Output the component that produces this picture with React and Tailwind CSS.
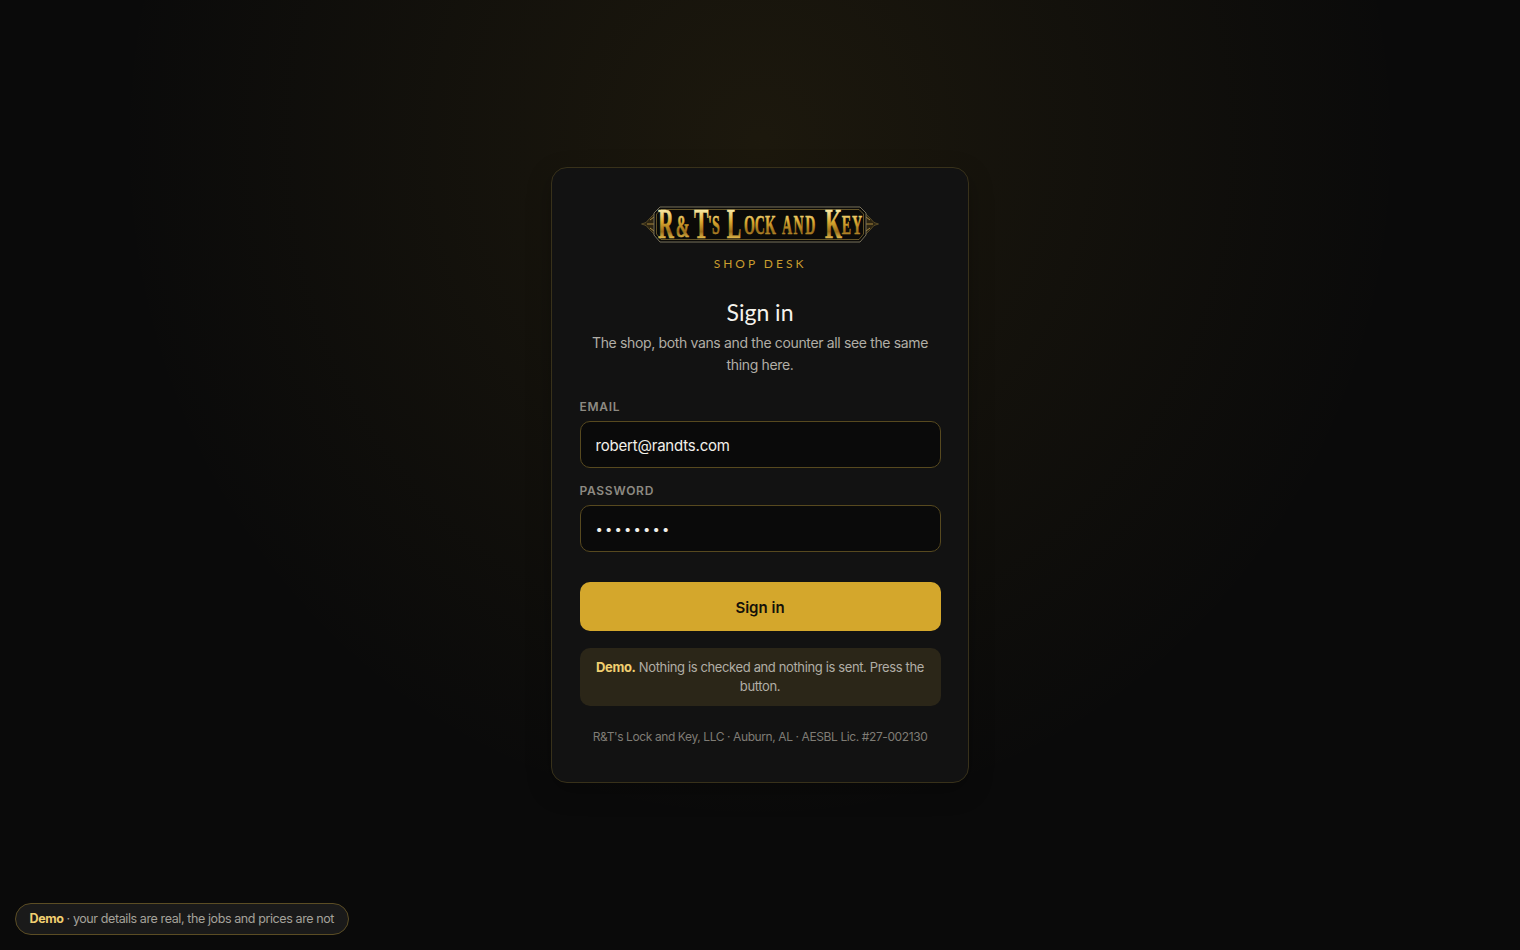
import React from "react";

const sans = "font-['Inter','Noto_Sans',sans-serif]";

function Logo() {
  return (
    <svg width="238" height="38" viewBox="0 0 238 38" className="block overflow-visible" aria-label="R&T's Lock and Key">
      <defs>
        <linearGradient id="gold" gradientUnits="userSpaceOnUse" x1="0" y1="5" x2="0" y2="34">
          <stop offset="0" stopColor="#f8e9a6" />
          <stop offset="0.4" stopColor="#dcaa30" />
          <stop offset="0.75" stopColor="#9a6d1a" />
          <stop offset="1" stopColor="#e8c050" />
        </linearGradient>
      </defs>
      {/* end ornaments */}
      <path d="M0.5 19 L5 17.5 L9 13 L14 8 L14 30 L9 25 L5 20.5 Z M237.500 19 L233 17.5 L229 13 L224 8 L224 30 L229 25 L233 20.5 Z" fill="#2c2412" stroke="#7d6a33" strokeWidth="0.6" />
      <path d="M6 19 L13 19 M9 15 L13 12 M9 23 L13 26 M232 19 L225 19 M229 15 L225 12 M229 23 L225 26" stroke="#c9a24a" strokeWidth="0.8" fill="none" />
      <path d="M19 2 H219 L225 8 V30 L219 37 H19 L13 30 V8 Z" fill="#0b0a08" stroke="#77705a" strokeWidth="1" />
      <path d="M20 4.500 H218 L222.500 9 V29 L218 34.500 H20 L15.500 29 V9 Z" fill="none" stroke="#8a7436" strokeWidth="0.7" />
      <g transform="scale(0.52 1)">
        <text
          fill="url(#gold)"
          stroke="url(#gold)"
          strokeWidth="0.5"
          fontFamily="'Liberation Serif', serif"
          fontWeight="700"
          fontSize="27"
        >
          <tspan x="32.700" y="33" fontSize="42">R</tspan>
          <tspan x="67" y="32" fontSize="32">&amp;</tspan>
          <tspan x="102" y="33" fontSize="42">T</tspan>
          <tspan x="129" y="29">'S </tspan>
          <tspan x="165" y="33" fontSize="42">L</tspan>
          <tspan x="198" y="29">OCK </tspan>
          <tspan x="271" y="29" letterSpacing="3">AND </tspan>
          <tspan x="354" y="33" fontSize="42">K</tspan>
          <tspan x="386" y="29" letterSpacing="2">EY</tspan>
        </text>
      </g>
    </svg>
  );
}

function Field({ label, type, value, className, inputClass }) {
  return (
    <label className={`block ${className}`}>
      <span className="block text-[12px] leading-[17px] font-semibold tracking-[0.06em] uppercase text-[#8d8a82] mb-1.5">{label}</span>
      <input
        type={type}
        defaultValue={value}
        className={`block w-full h-[47px] rounded-[10px] border border-[#57491f] bg-[#0a0a0a] px-[15px] text-[#f3f1ea] outline-none ${inputClass} ${sans}`}
      />
    </label>
  );
}

export default function App() {
  return (
    <div className={`relative min-h-screen flex items-center justify-center bg-[#0a0a0a] bg-[radial-gradient(ellipse_at_50%_15%,rgba(212,167,44,0.09),transparent_60%)] ${sans}`}>
      <div className="w-[418px] rounded-2xl border border-[#38311a] bg-[#121212] px-[27.5px] pt-[37px] pb-[36px] shadow-[0_8px_24px_rgba(0,0,0,0.25)]">
        <div className="flex flex-col items-center">
          <Logo />
          <div className="mt-[12px] text-[12px] leading-[18px] tracking-[0.25em] text-[#c99d2e] font-['Lato',sans-serif]">SHOP DESK</div>
        </div>
        <h1 className="mt-[21px] text-center text-[23px] leading-[36px] font-normal text-[#f5f3ec] font-['Lato',sans-serif]">Sign in</h1>
        <p className="mt-[2px] text-center text-[14px] leading-[22px] tracking-[-0.35px] text-[#b1aea6]">
          The shop, both vans and the counter all see the same thing here.
        </p>
        <Field label="Email" type="email" value="robert@randts.com" className="mt-[22px]" inputClass="pt-[2px] text-[15px] tracking-[-0.2px]" />
        <Field label="Password" type="password" value="password" className="mt-[14px]" inputClass="text-[13px] tracking-[2.2px]" />
        <button type="button" className="mt-[30px] block w-full h-[49px] rounded-[10px] bg-[#d4a72c] pt-[3px] text-[15px] font-semibold text-[#14110a]">
          Sign in
        </button>
        <div className="mt-[17px] rounded-[10px] bg-[#2b2618] px-4 py-[10px] text-center text-[13px] leading-[19px] tracking-[-0.37px] text-[#b1aea6]">
          <b className="font-bold text-[#f0cf70]">Demo.</b> Nothing is checked and nothing is sent. Press the button.
        </div>
        <p className="mt-[22px] text-center text-[12px] leading-[18px] tracking-[-0.4px] text-[#7f7c75]">
          R&amp;T's Lock and Key, LLC · Auburn, AL · AESBL Lic. #27-002130
        </p>
      </div>
      <div className="absolute left-[15px] bottom-[15px] h-8 flex items-center rounded-full border border-[#5b4d24] bg-[#1a1a1a] px-[13.5px] pt-px text-[12.5px] tracking-[-0.4px] text-[#a5a29a]">
        <b className="font-bold text-[#f0cf70]">Demo</b>
        <span className="whitespace-pre"> · your details are real, the jobs and prices are not</span>
      </div>
    </div>
  );
}
